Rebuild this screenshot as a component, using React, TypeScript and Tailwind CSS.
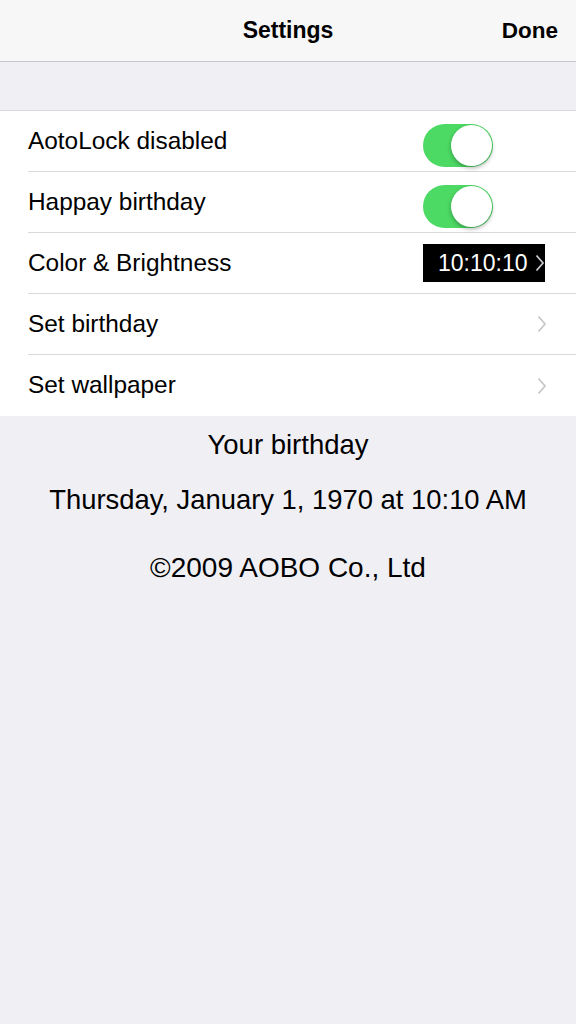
import React from 'react'

function Toggle() {
  return (
    <div className="relative w-[70px] h-[43px] rounded-full bg-[#4cd964]">
      <div className="absolute right-[1px] top-[1px] w-[41px] h-[41px] rounded-full bg-white shadow-[0_2px_4px_rgba(0,0,0,0.3)]" />
    </div>
  )
}

function Chevron() {
  return (
    <svg width="10" height="18" viewBox="0 0 10 18" fill="none">
      <path d="M1.5 1.5 L8 9 L1.5 16.5" stroke="#c7c7cc" strokeWidth="1.8" />
    </svg>
  )
}

function Row({ label, last, children }: { label: string; last?: boolean; children?: React.ReactNode }) {
  return (
    <div className="pl-[28px] bg-white">
      <div className={`h-[61px] flex items-center pr-[29px] ${last ? '' : 'border-b border-[#d9d9dd]'}`}>
        <span className="flex-1 text-[24.4px] text-black">{label}</span>
        {children}
      </div>
    </div>
  )
}

export default function App() {
  return (
    <main className="w-[576px] h-[1024px] bg-[#efeff4] font-['Liberation_Sans',Arial,sans-serif]">
      <header className="h-[62px] bg-[#f7f7f7] border-b border-[#c8c7cc] flex items-center relative">
        <h1 className="flex-1 text-center text-[23px] font-semibold text-black">Settings</h1>
        <span className="absolute right-[18px] text-[22.5px] font-semibold text-black">Done</span>
      </header>
      <div className="h-[49px] border-b border-[#d9d9dd]" />
      <section>
        <Row label="AotoLock disabled">
          <div className="mr-[54px] mt-[8px]"><Toggle /></div>
        </Row>
        <Row label="Happay birthday">
          <div className="mr-[54px] mt-[8px]"><Toggle /></div>
        </Row>
        <Row label="Color & Brightness">
          <div className="relative mr-[2px] w-[122px] h-[38px] bg-black flex items-center pl-[15px]">
            <span className="text-[23px] text-white">10:10:10</span>
            <span className="absolute right-[0px] top-[10px]"><Chevron /></span>
          </div>
        </Row>
        <Row label="Set birthday">
          <Chevron />
        </Row>
        <Row label="Set wallpaper" last>
          <Chevron />
        </Row>
      </section>
      <div className="flex flex-col items-center text-black">
        <p className="mt-[13px] text-[27.5px] leading-[32px]">Your birthday</p>
        <p className="mt-[22px] text-[27.4px] leading-[34px]">Thursday, January 1, 1970 at 10:10 AM</p>
        <p className="mt-[34px] text-[28px] leading-[34px]">©2009 AOBO Co., Ltd</p>
      </div>
    </main>
  )
}
